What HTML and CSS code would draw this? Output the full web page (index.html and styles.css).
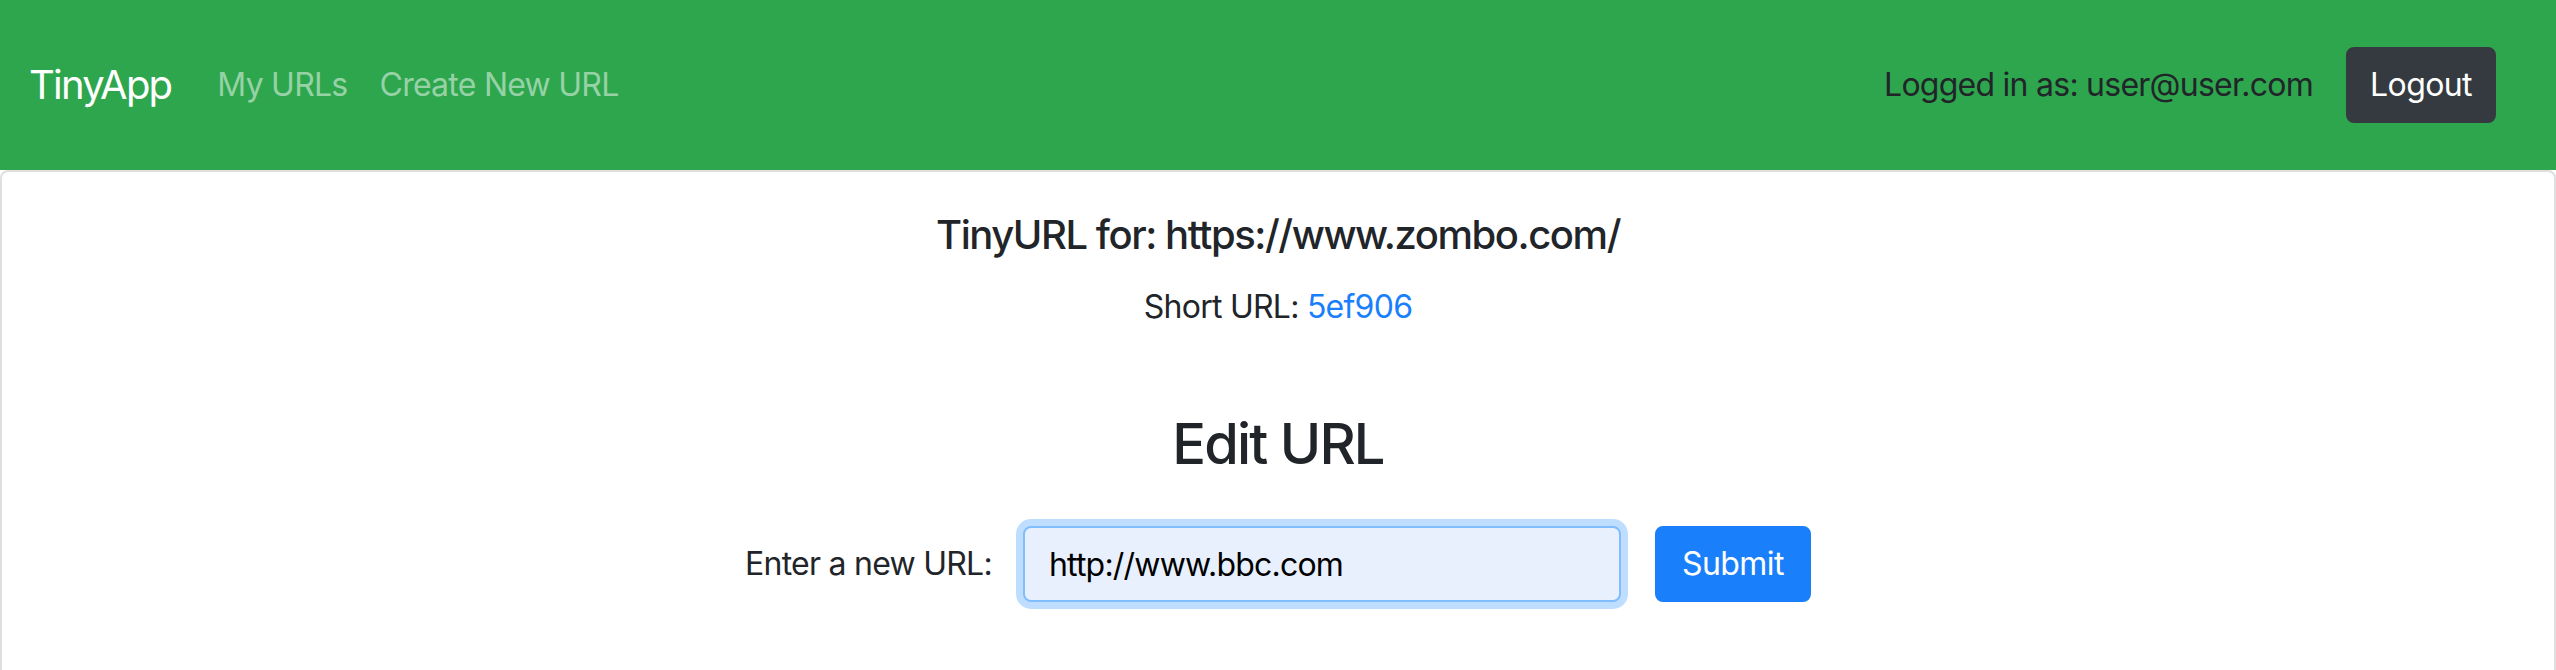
FILE: index.html
```html
<!DOCTYPE html>
<html lang="en">
<head>
<meta charset="utf-8">
<title>TinyApp</title>
<link rel="stylesheet" href="styles.css">
</head>
<body>
<nav class="navbar">
  <a class="brand" href="#">TinyApp</a>
  <div class="nav-links">
    <a class="nav-link" href="#">My URLs</a>
    <a class="nav-link" href="#">Create New URL</a>
  </div>
  <div class="nav-right">
    <span class="user-text">Logged in as: user@user.com</span>
    <button class="btn btn-dark" type="button">Logout</button>
  </div>
</nav>
<main class="card">
  <div class="card-body">
    <h5 class="card-title">TinyURL for: https://www.zombo.com/</h5>
    <p class="card-text">Short URL: <a class="link" href="#">5ef906</a></p>
  </div>
  <section class="edit">
    <h3 class="edit-title">Edit URL</h3>
    <form class="form-inline">
      <label class="form-label" for="longURL">Enter a new URL:</label>
      <input class="form-control" id="longURL" type="text" value="http://www.bbc.com">
      <button class="btn btn-primary" type="button">Submit</button>
    </form>
  </section>
</main>
</body>
</html>
```
FILE: styles.css
```css
* { box-sizing: border-box; }

html, body {
  margin: 0;
  padding: 0;
  background: #ffffff;
}

body {
  font-family: Inter, "Noto Sans", Roboto, "Liberation Sans", sans-serif;
  font-size: 32px;
  letter-spacing: -0.75px;
  color: #212529;
  overflow: hidden;
}

.navbar {
  height: 170px;
  background: #2ea64d;
  display: flex;
  align-items: center;
  padding: 0 60px 0 29px;
}

.brand {
  font-size: 40px;
  letter-spacing: -1.8px;
  color: #ffffff;
  text-decoration: none;
  line-height: 60px;
  margin-right: 30px;
}

.nav-links {
  display: flex;
}

.nav-link {
  color: #96d2a6;
  text-decoration: none;
  padding: 0 16px;
  line-height: 48px;
}

.nav-right {
  margin-left: auto;
  display: flex;
  align-items: center;
  gap: 33px;
}

.user-text {
  color: #212529;
  line-height: 48px;
}

.btn {
  font-family: inherit;
  font-size: 32px;
  letter-spacing: -0.6px;
  height: 76px;
  padding: 0;
  border: 2px solid transparent;
  border-radius: 8px;
  color: #ffffff;
  line-height: 48px;
  cursor: pointer;
}

.btn-dark {
  background: #353a41;
  border-color: #353a41;
  width: 150px;
}

.btn-primary {
  background: #1a7ffb;
  border-color: #1a7ffb;
  width: 156px;
  margin-left: 34px;
}

.card {
  display: block;
  border: 2px solid rgba(0, 0, 0, 0.125);
  border-radius: 8px;
  min-height: 600px;
  text-align: center;
}

.card-body {
  padding: 39px 40px 0;
}

.card-title {
  font-size: 40px;
  font-weight: 500;
  letter-spacing: -1.45px;
  line-height: 48px;
  margin: 0 0 24px;
}

.card-text {
  line-height: 48px;
  margin: 0;
}

.link {
  color: #1a7ffb;
  text-decoration: none;
}

.edit {
  padding-top: 80px;
}

.edit-title {
  font-size: 56px;
  font-weight: 500;
  letter-spacing: -1.8px;
  line-height: 67px;
  margin: 0 0 48px;
}

.form-inline {
  display: flex;
  justify-content: center;
  align-items: center;
}

.form-label {
  line-height: 48px;
  margin-right: 31px;
}

.form-control {
  width: 598px;
  height: 76px;
  padding: 0 24px;
  font-family: inherit;
  font-size: 32px;
  letter-spacing: -0.8px;
  color: #000000;
  background: #e8f0fe;
  border: 2px solid #80bdff;
  border-radius: 8px;
  box-shadow: 0 0 0 7px rgba(0, 123, 255, 0.25);
  outline: none;
}
```
